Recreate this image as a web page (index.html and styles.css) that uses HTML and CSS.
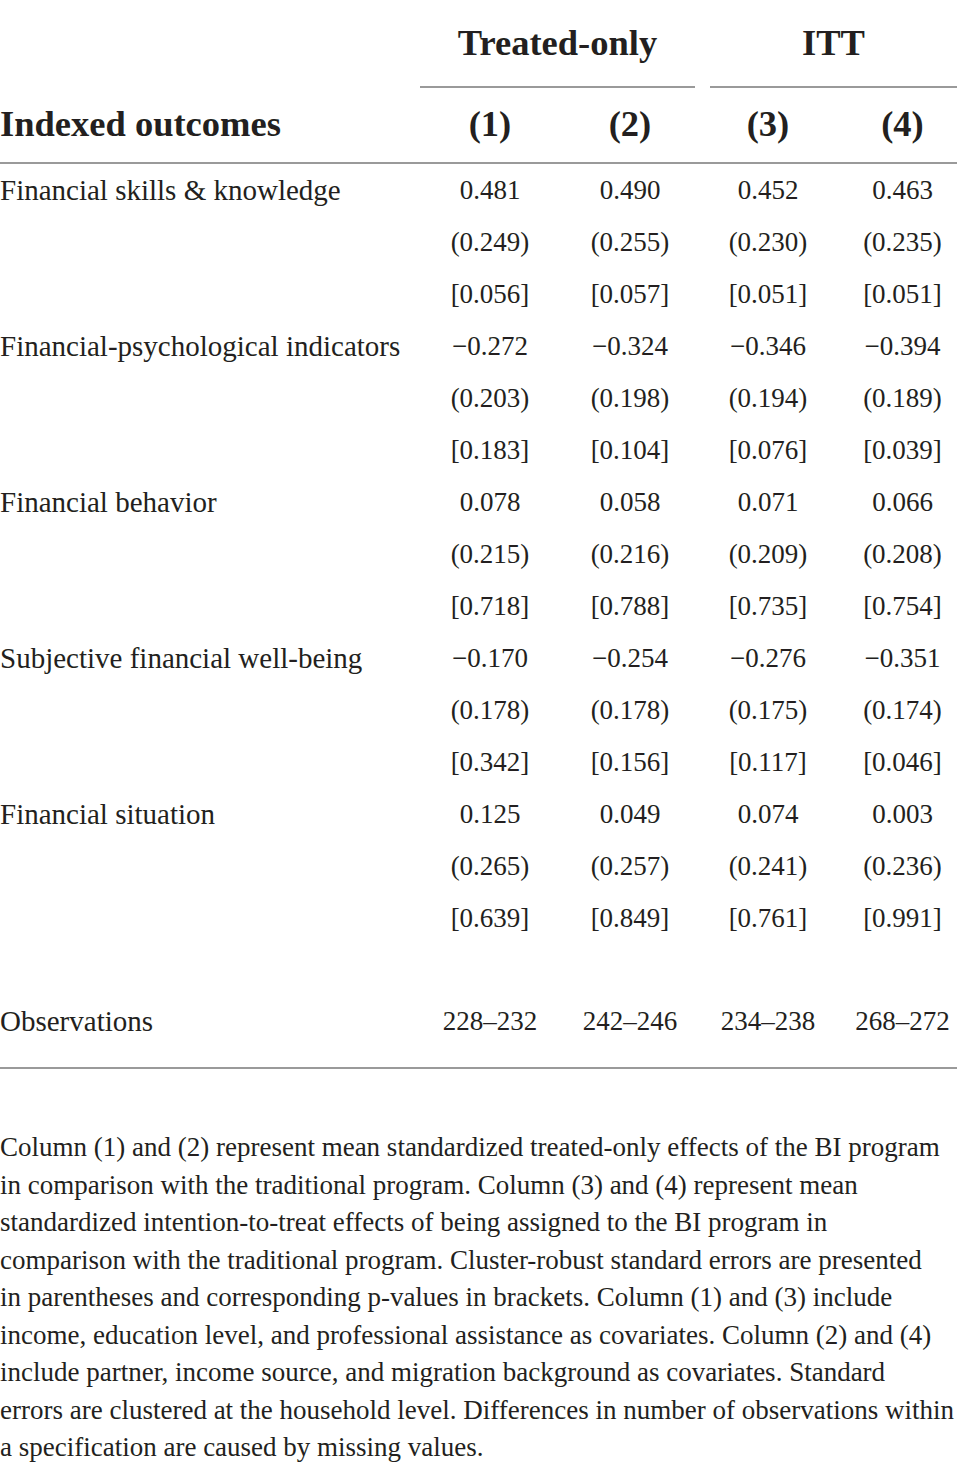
FILE: index.html
```html
<!DOCTYPE html>
<html>
<head>
<meta charset="utf-8">
<link rel="stylesheet" href="styles.css">
</head>
<body>
<div class="page">
  <div class="grid head1">
    <div class="cell label"></div>
    <div class="cell span2 grp grp-a"><span>Treated-only</span></div>
    <div class="cell span2 grp grp-b"><span>ITT</span></div>
  </div>
  <div class="grid head2">
    <div class="cell label">Indexed outcomes</div>
    <div class="cell num c1">(1)</div>
    <div class="cell num c2">(2)</div>
    <div class="cell num c3">(3)</div>
    <div class="cell num c4">(4)</div>
  </div>
  <div class="body">
    <div class="grid row"><div class="cell label">Financial skills &amp; knowledge</div><div class="cell num c1">0.481</div><div class="cell num c2">0.490</div><div class="cell num c3">0.452</div><div class="cell num c4">0.463</div></div>
    <div class="grid row"><div class="cell label"></div><div class="cell num c1">(0.249)</div><div class="cell num c2">(0.255)</div><div class="cell num c3">(0.230)</div><div class="cell num c4">(0.235)</div></div>
    <div class="grid row"><div class="cell label"></div><div class="cell num c1">[0.056]</div><div class="cell num c2">[0.057]</div><div class="cell num c3">[0.051]</div><div class="cell num c4">[0.051]</div></div>
    <div class="grid row"><div class="cell label">Financial-psychological indicators</div><div class="cell num c1">−0.272</div><div class="cell num c2">−0.324</div><div class="cell num c3">−0.346</div><div class="cell num c4">−0.394</div></div>
    <div class="grid row"><div class="cell label"></div><div class="cell num c1">(0.203)</div><div class="cell num c2">(0.198)</div><div class="cell num c3">(0.194)</div><div class="cell num c4">(0.189)</div></div>
    <div class="grid row"><div class="cell label"></div><div class="cell num c1">[0.183]</div><div class="cell num c2">[0.104]</div><div class="cell num c3">[0.076]</div><div class="cell num c4">[0.039]</div></div>
    <div class="grid row"><div class="cell label">Financial behavior</div><div class="cell num c1">0.078</div><div class="cell num c2">0.058</div><div class="cell num c3">0.071</div><div class="cell num c4">0.066</div></div>
    <div class="grid row"><div class="cell label"></div><div class="cell num c1">(0.215)</div><div class="cell num c2">(0.216)</div><div class="cell num c3">(0.209)</div><div class="cell num c4">(0.208)</div></div>
    <div class="grid row"><div class="cell label"></div><div class="cell num c1">[0.718]</div><div class="cell num c2">[0.788]</div><div class="cell num c3">[0.735]</div><div class="cell num c4">[0.754]</div></div>
    <div class="grid row"><div class="cell label">Subjective financial well-being</div><div class="cell num c1">−0.170</div><div class="cell num c2">−0.254</div><div class="cell num c3">−0.276</div><div class="cell num c4">−0.351</div></div>
    <div class="grid row"><div class="cell label"></div><div class="cell num c1">(0.178)</div><div class="cell num c2">(0.178)</div><div class="cell num c3">(0.175)</div><div class="cell num c4">(0.174)</div></div>
    <div class="grid row"><div class="cell label"></div><div class="cell num c1">[0.342]</div><div class="cell num c2">[0.156]</div><div class="cell num c3">[0.117]</div><div class="cell num c4">[0.046]</div></div>
    <div class="grid row"><div class="cell label">Financial situation</div><div class="cell num c1">0.125</div><div class="cell num c2">0.049</div><div class="cell num c3">0.074</div><div class="cell num c4">0.003</div></div>
    <div class="grid row"><div class="cell label"></div><div class="cell num c1">(0.265)</div><div class="cell num c2">(0.257)</div><div class="cell num c3">(0.241)</div><div class="cell num c4">(0.236)</div></div>
    <div class="grid row"><div class="cell label"></div><div class="cell num c1">[0.639]</div><div class="cell num c2">[0.849]</div><div class="cell num c3">[0.761]</div><div class="cell num c4">[0.991]</div></div>
    <div class="grid row obs"><div class="cell label">Observations</div><div class="cell num c1">228–232</div><div class="cell num c2">242–246</div><div class="cell num c3">234–238</div><div class="cell num c4">268–272</div></div>
  </div>
  <p class="note">Column (1) and (2) represent mean standardized treated-only effects of the BI program<br>in comparison with the traditional program. Column (3) and (4) represent mean<br>standardized intention-to-treat effects of being assigned to the BI program in<br>comparison with the traditional program. Cluster-robust standard errors are presented<br>in parentheses and corresponding p-values in brackets. Column (1) and (3) include<br>income, education level, and professional assistance as covariates. Column (2) and (4)<br>include partner, income source, and migration background as covariates. Standard<br>errors are clustered at the household level. Differences in number of observations within<br>a specification are caused by missing values.</p>
</div>
</body>
</html>
```

FILE: styles.css
```css
html, body {
  margin: 0;
  padding: 0;
  background: #ffffff;
}
.page {
  width: 957px;
  color: #231f20;
  font-family: "Liberation Serif", "Times New Roman", serif;
}
.grid {
  display: grid;
  grid-template-columns: 420px 140px 140px 136px 121px;
}
.cell {
  white-space: nowrap;
}
.num {
  text-align: center;
}
.c4 {
  padding-left: 12px;
}
.head1 {
  height: 86px;
  font-size: 36.5px;
  font-weight: bold;
}
.span2 {
  grid-column: span 2;
  border-bottom: 2px solid #9a9a9a;
  display: flex;
  align-items: center;
  justify-content: center;
}
.grp-a {
  margin-right: 5px;
}
.grp-b {
  margin-left: 10px;
}
.head1 .grp span {
  line-height: 86px;
}
.head2 {
  height: 76px;
  font-size: 36.5px;
  font-weight: bold;
  border-bottom: 2px solid #9a9a9a;
}
.head2 .cell {
  line-height: 76px;
}
.body {
  border-bottom: 2px solid #9a9a9a;
  padding-bottom: 20px;
}
.row {
  font-size: 27px;
  height: 52px;
  line-height: 52px;
}
.row .label {
  font-size: 29px;
}
.obs {
  margin-top: 51px;
}
.note {
  margin: 60px 0 0 0;
  font-size: 27px;
  line-height: 37.5px;
  white-space: nowrap;
}
```
